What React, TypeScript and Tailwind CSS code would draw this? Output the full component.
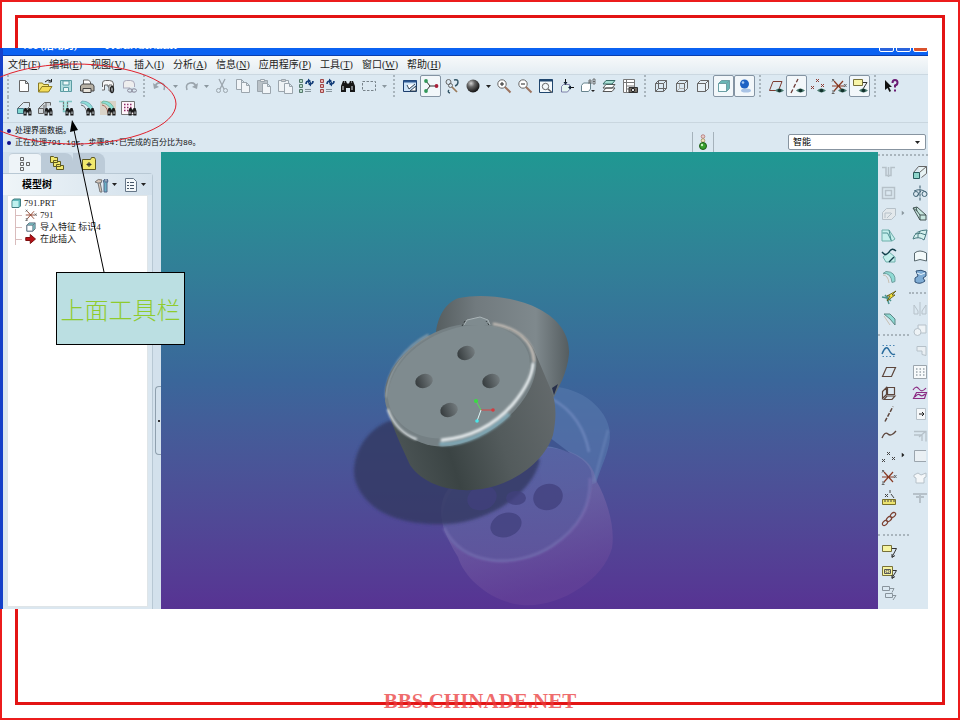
import type { ReactNode } from "react";

type Tool = { label: string; icon: ReactNode; on?: boolean; more?: boolean };

const Glyph = ({ children }: { children: ReactNode }) => (
  <svg viewBox="0 0 16 16" className="h-4 w-4 shrink-0" fill="none" stroke="#666" strokeWidth="1" aria-hidden="true">
    {children}
  </svg>
);

const Bino = () => (
  <g stroke="none" fill="#1c1c1c">
    <path d="M7.5 11l1-3h2l.5 1.5h1l.5-1.5h2l1 3v4.5h-3.2v-3h-1.6v3H7.5z" />
    <path d="M8.5 11.5h1v2.500h-1zM13.500 11.500h1v2.500h-1z" fill="#cfd8dc" />
  </g>
);

const Eye = () => (
  <g stroke="none">
    <path d="M7 12.500q4-4 9 0q-4.500 4-9 0z" fill="#4f7d73" />
    <circle cx="11.500" cy="12.500" r="1.800" fill="#12312c" />
  </g>
);

const Sheet = ({ x, y, c }: { x: number; y: number; c: string }) => (
  <path d={`M${x} ${y}h5l3 3v7h-8zM${x + 5} ${y}v3h3`} fill="#f1f5f8" stroke={c} />
);

const Crosses = ({ c }: { c: string }) => (
  <path d="M6 1l3 3M9 1l-3 3M1 8l3 3M4 8l-3 3M11 6l3 3M14 6l-3 3" stroke={c} />
);

const Axes = () => (
  <g>
    <path d="M3 3l9 10M12 3l-9 10M1 8h12" stroke="#8a3b24" strokeWidth="1.200" />
    <path d="M1 1l2 2M3 1l-2 2.500M13 6l2.500 3M15.500 6L13 9M1 13h2.500l-2.500 2.500h2.500" stroke="#666" />
  </g>
);

const Cube = ({ face, side, line }: { face: string; side: string; line: string }) => (
  <g stroke={line}>
    <path d="M2.500 5.500l3-3h8v8l-3 3h-8z" fill={side} />
    <path d="M2.500 5.500h8v8h-8zM10.500 5.500l3-3" fill={face} />
  </g>
);

const fileTools: Tool[] = [
  { label: "新建", icon: <Glyph><path d="M3.500 2.500h6l3 3v8h-9zM9.500 2.500v3h3" fill="#fff" /></Glyph> },
  { label: "打开", icon: <Glyph><path d="M1.500 14V5h4l1 1.500h5V9" fill="#f6e77d" stroke="#8a7a20" /><path d="M1.500 14L5 8.500h10L11.500 14z" fill="#f3dc58" stroke="#8a7a20" /><path d="M8 4q3-3.500 6-1M14.500 1v3h-3" stroke="#222" /></Glyph> },
  { label: "保存", icon: <Glyph><path d="M2.500 2.500h11v11h-11z" fill="#b3dedf" stroke="#5b9ca3" /><path d="M5 3h6v4H5zM5.500 9.500h5v4h-5z" fill="#eef8f8" stroke="#5b9ca3" /></Glyph> },
  { label: "打印", icon: <Glyph><path d="M4.500 7V2h5l2 2v3" fill="#fff" /><path d="M1.500 8l2-2h10l1.500 2v5h-13.500z" fill="#b8b2a6" stroke="#444" /><path d="M4 10.500h8v4H4z" fill="#e9e5dc" stroke="#444" /></Glyph> },
  { label: "发送", icon: <Glyph><path d="M2.500 9V5q0-2.500 3-2.500h4q4 0 4 3.500V9H8V7H4.500v5H2" fill="#f7f7f7" /><path d="M9 7h3v6H9z" fill="#fff" /><ellipse cx="12" cy="11.500" rx="1.500" ry="3" stroke="#222" strokeWidth="1.300" /></Glyph> },
  { label: "链接", icon: <Glyph><path d="M2.500 10V5q0-2.500 3-2.500h4q4 0 4 3.500v3" fill="#eee" stroke="#aab" /><path d="M2 10h7" stroke="#aab" /><ellipse cx="9" cy="12.500" rx="2.500" ry="1.700" stroke="#889" /><ellipse cx="13" cy="12.500" rx="2.500" ry="1.700" stroke="#889" /></Glyph> },
];

const gray = "#9ba5ad";

const undoTools: Tool[] = [
  { label: "撤消", more: true, icon: <Glyph><path d="M3 9q1-5 6-4t3 7" stroke={gray} strokeWidth="1.600" /><path d="M1 5l1 6 5-2z" fill={gray} stroke="none" /></Glyph> },
  { label: "重做", more: true, icon: <Glyph><path d="M13 9q-1-5-6-4t-3 7" stroke={gray} strokeWidth="1.600" /><path d="M15 5l-1 6-5-2z" fill={gray} stroke="none" /></Glyph> },
  { label: "剪切", icon: <Glyph><path d="M5 1l5 10M11 1L6 11" stroke={gray} strokeWidth="1.300" /><circle cx="4.500" cy="12.500" r="2" stroke={gray} /><circle cx="11.500" cy="12.500" r="2" stroke={gray} /></Glyph> },
  { label: "复制", icon: <Glyph><Sheet x={1.5} y={1.5} c={gray} /><Sheet x={6.5} y={4.5} c={gray} /></Glyph> },
  { label: "粘贴", icon: <Glyph><path d="M1.500 2.500h10v11h-10z" fill="#b9c1c7" stroke={gray} /><path d="M4.500 1.500h4v2h-4z" fill="#eee" stroke={gray} /><Sheet x={6.5} y={5.5} c={gray} /></Glyph> },
  { label: "选择性粘贴", icon: <Glyph><path d="M1.500 2.500h10v11h-10z" fill="#eef2f4" stroke={gray} /><path d="M4.500 1.500h4v2h-4z" fill="#ccc" stroke={gray} /><Sheet x={7.5} y={5.5} c={gray} /></Glyph> },
  { label: "再生", icon: <Glyph><path d="M1.500 1.500h3v3h-3zM1.500 6.500h3v3h-3zM1.500 11.500h3v3h-3z" fill="#b7d9c9" stroke="#557a6d" /><path d="M8 6q0-3 3-3M15 3q0 3-3 3" stroke="#123c78" strokeWidth="1.600" /><path d="M10 .5l3 2.500-3 2.500zM13 3.500v5l-3-2.500z" fill="#123c78" stroke="none" /><path d="M7 11.500h6M7 13.500h6" stroke="#89979f" /></Glyph> },
  { label: "再生管理器", icon: <Glyph><path d="M1.500 1.500h3v3h-3zM1.500 6.500h3v3h-3zM1.500 11.500h3v3h-3z" fill="#e8b3b3" stroke="#a04848" /><path d="M8 6q0-3 3-3M15 3q0 3-3 3" stroke="#123c78" strokeWidth="1.600" /><path d="M10 .5l3 2.500-3 2.500zM13 3.500v5l-3-2.500z" fill="#123c78" stroke="none" /><path d="M7 11.500h6M7 13.500h6" stroke="#89979f" /></Glyph> },
  { label: "查找", icon: <Glyph><path d="M1 8l2-5h3l1 2.500h2L10 3h3l2 5v6h-5v-4H6v4H1z" fill="#171717" stroke="none" /><path d="M3 8v4M12 8v4M4 4h1M11 4h1" stroke="#dce4e8" /></Glyph> },
  { label: "选取框", more: true, icon: <Glyph><path d="M1.500 3.500h13v9h-13z" stroke="#77828a" strokeDasharray="2.500 1.500" /></Glyph> },
];

const viewTools: Tool[] = [
  { label: "重画", icon: <Glyph><path d="M1.500 2.500h13v11h-13z" fill="#cde3f7" stroke="#1b3d6d" /><path d="M1.500 2.500h13v2h-13z" fill="#2b5690" stroke="none" /><path d="M5 7l2 4 6-5M8 13l6-5v5z" fill="#fff" stroke="#345" /></Glyph> },
  { label: "旋转中心", on: true, icon: <Glyph><path d="M3 3l4 5-4 5M7 8h6" stroke="#333" /><circle cx="3" cy="3" r="1.900" fill="#32975a" stroke="none" /><circle cx="3" cy="13" r="1.900" fill="#32975a" stroke="none" /><circle cx="13.500" cy="8" r="1.900" fill="#a81f38" stroke="none" /></Glyph> },
  { label: "定向模式", icon: <Glyph><circle cx="4.500" cy="4" r="2.500" /><circle cx="6.500" cy="7.500" r="2" /><path d="M8 9l5 5" stroke="#9a7a5a" strokeWidth="1.700" /><path d="M10 2q4-1 4 2t-3 4M5 12q-2 2 1 3" stroke="#356" strokeWidth="1.400" /></Glyph> },
  { label: "外观库", more: true, icon: <Glyph><circle cx="8" cy="8" r="6.500" fill="url(#ball)" stroke="none" /></Glyph> },
  { label: "放大", icon: <Glyph><circle cx="6" cy="6" r="4.200" fill="#fff" /><path d="M9 9l5.500 5.500" stroke="#9c7460" strokeWidth="2" /><path d="M4 6h4M6 4v4" stroke="#222" /></Glyph> },
  { label: "缩小", icon: <Glyph><circle cx="6" cy="6" r="4.200" fill="#fff" /><path d="M9 9l5.500 5.500" stroke="#9c7460" strokeWidth="2" /><path d="M4 6h4" stroke="#222" /></Glyph> },
  { label: "重新调整", icon: <Glyph><path d="M1.500 1.500h13v13h-13z" fill="#f4f9fc" stroke="#20466e" /><path d="M1.500 2.500h13" stroke="#20466e" strokeWidth="2" /><circle cx="7.500" cy="8.500" r="3.200" /><path d="M10 11l4 3.500" strokeWidth="1.600" /></Glyph> },
  { label: "重定向", icon: <Glyph><path d="M2.500 8.500l2-2h6v5l-2 2.500h-6z" fill="#e4f5f1" stroke="#669" strokeWidth=".8" /><path d="M6.500 1v5M15 9.500h-5" stroke="#111" /><path d="M4.500 4h4l-2 3zM12 7.500v4l-3-2z" fill="#123" stroke="none" /></Glyph> },
  { label: "已保存视图", icon: <Glyph><path d="M1.500 7.500l2-2.500h7v6l-2 2.500h-7z" fill="#fff" stroke="#67838d" /><path d="M9 6V2h2v4M9 4h2M13 1v5h2V1zM13 3.500h2" stroke="#555" strokeWidth=".8" /><path d="M11 12h4l-2 2z" fill="#222" stroke="none" /></Glyph> },
  { label: "图层", icon: <Glyph><path d="M2 13.500l3-3.500h9l-3 3.500zM2 10l3-3.500h9L11 10z" fill="#fff" stroke="#555" /><path d="M2 6l3-3.500h9L11 6z" fill="#a8e0d5" stroke="#396b66" /></Glyph> },
  { label: "视图管理器", icon: <Glyph><path d="M1.500 1.500h11v13h-11zM1.500 4.500h11M4.500 1.500v13M4.500 8h8M4.500 11h4" fill="#fff" stroke="#777" /><path d="M7 9.500h8.500v5H7z" fill="#776f66" stroke="#333" /><circle cx="11" cy="12" r="1.700" fill="#ddd" stroke="#222" /></Glyph> },
];

const displayTools: Tool[] = [
  { label: "线框", icon: <Glyph><path d="M2.500 5.500h8v8h-8zM5.500 2.500h8v8h-8zM2.500 5.500l3-3M10.500 5.500l3-3M2.500 13.500l3-3M10.500 13.500l3-3" /></Glyph> },
  { label: "隐藏线", icon: <Glyph><Cube face="none" side="none" line="#666" /><path d="M5.500 6v4.500h5M2.500 13.500l3-3" stroke="#aaa" /></Glyph> },
  { label: "消隐", icon: <Glyph><Cube face="#e7f0f6" side="#e7f0f6" line="#666" /></Glyph> },
  { label: "着色", on: true, icon: <Glyph><Cube face="#f6ffff" side="#67b7b5" line="#6b9fa4" /></Glyph> },
  { label: "增强的真实感", on: true, icon: <Glyph><ellipse cx="9" cy="12.500" rx="5" ry="2" fill="#a9c3e5" stroke="none" /><circle cx="7.500" cy="6" r="4.500" fill="#1e62c4" stroke="none" /><circle cx="6" cy="4.500" r="1.300" fill="#a9cdf6" stroke="none" /></Glyph> },
];

const datumTools: Tool[] = [
  { label: "平面显示", icon: <Glyph><path d="M1.500 12.500L5 3.500h9l-3.500 9z" stroke="#7c3c31" /><Eye /></Glyph> },
  { label: "轴显示", on: true, icon: <Glyph><path d="M2 15L9 1" stroke="#6b3a36" strokeWidth="1.300" strokeDasharray="4 2" /><Eye /></Glyph> },
  { label: "点显示", icon: <Glyph><Crosses c="#8c3a32" /><Eye /></Glyph> },
  { label: "坐标系显示", icon: <Glyph><Axes /><Eye /></Glyph> },
  { label: "注释显示", on: true, icon: <Glyph><path d="M1.500 1.500h9v6h-9z" fill="#f8f5a8" stroke="#777139" /><path d="M11 4.500h4L11 11" stroke="#333" /><Eye /></Glyph> },
];

const helpTools: Tool[] = [
  { label: "上下文帮助", icon: <Glyph><path d="M2 2v10l2.500-2 2 4 1.500-1-2-4h3z" fill="#111" stroke="none" /><path d="M9.500 5q0-3 2.500-3t2.500 2.500-2.500 3v2M12 11.500v2" stroke="#6a1b73" strokeWidth="2" /></Glyph> },
];

const findTools: Tool[] = [
  { label: "查找拉伸", icon: <Glyph><path d="M1.500 8.500h6v5h-6z" fill="#7ed6cf" stroke="#478" /><path d="M1.500 8.500l6-6h6v4L8 12" /><Bino /></Glyph> },
  { label: "查找旋转", icon: <Glyph><path d="M1.500 8.500h5v5h-5zM1.500 8.500l6-6h6v3M7 5v5M9 3v5" fill="#d0d6da" /><Bino /></Glyph> },
  { label: "查找孔", icon: <Glyph><path d="M1 1.500h4.500v10h4v-10H14" fill="#b7ebe6" stroke="#7cc4c2" strokeWidth="1.500" /><path d="M5.500 2v9M9.500 2v5" stroke="#777" strokeDasharray="2 1" /><Bino /></Glyph> },
  { label: "查找圆角", icon: <Glyph><path d="M1.500 3q7 0 10 8l3-1Q12 1 3 1z" fill="#8edfd8" stroke="#69a" strokeWidth=".7" /><path d="M2 5q5 1 6 8" /><Bino /></Glyph> },
  { label: "查找倒角", icon: <Glyph><path d="M0 1h16v14H0z" fill="#d9d3c8" stroke="none" /><path d="M1.500 3q7 0 10 8l3-1Q12 1 3 1z" fill="#8edfd8" stroke="#6a8" strokeWidth=".7" /><path d="M2 5q5 1 6 8" stroke="#a65" /><Bino /></Glyph> },
  { label: "查找阵列", icon: <Glyph><path d="M.5 1.500h13v13H.5z" fill="#fff5fb" stroke="#777" /><path d="M3 4.500h9M3 7.500h9M3 10.500h6" stroke="#8c2b66" strokeWidth="1.500" strokeDasharray="1.500 1.500" /><Bino /></Glyph> },
];

const pale = "#b6c1c9";
const teal = "#8fdad4";
const brown = "#5d463c";

const sideA: Tool[] = [
  { label: "孔", icon: <Glyph><path d="M1 3.500h4v8h5v-8h4M7.500 3v10" stroke={pale} strokeWidth="1.500" /></Glyph> },
  { label: "壳", icon: <Glyph><path d="M1.500 2.500h12v11h-12zM4.500 5.500h6v5h-6z" stroke={pale} strokeWidth="1.500" /></Glyph> },
  { label: "筋", more: true, icon: <Glyph><path d="M1.500 6.500l4-4h9v7l-4 4h-9zM4 12V7h6M6 12l5-5" fill="#e3e8eb" stroke={pale} /></Glyph> },
  { label: "拔模", icon: <Glyph><path d="M1 3h7l6 9-3 2H1z" fill="#c4efec" stroke="#6fafab" /><path d="M1.500 6h5l4 8M8 3l2 10" stroke="#4f9293" /></Glyph> },
  { label: "倒圆角", icon: <Glyph><path d="M8 4l6 5v5H5L2 9z" fill="#c4efec" stroke="#6fafab" /><path d="M1 4q4 5 7 0t7-1M8 14l5-5" stroke="#143f4b" strokeWidth="1.400" /></Glyph> },
  { label: "自动倒圆角", icon: <Glyph><path d="M2 4.500q8-1 9 9l3-1q1-10-9-10z" fill={teal} stroke="#6f9f9f" /><path d="M2 6q5 0 6 8" stroke="#c8c0b3" /></Glyph> },
  { label: "快速倒圆角", icon: <Glyph><path d="M1 7l5 1 2 6M4 5l6 6" stroke="#4a938f" strokeWidth="1.500" /><path d="M15 1L6 6h3L6 11l8-6h-3z" fill="#f4e13c" stroke="#57500f" strokeWidth=".8" /></Glyph> },
  { label: "倒角", icon: <Glyph><path d="M3 3h6l5 5v6l-5-6z" fill={teal} stroke="#5d8785" /><path d="M3 5l6 9" stroke="#c8c0b3" /></Glyph> },
];

const sideB: Tool[] = [
  { label: "草绘", icon: <Glyph><path d="M1 11q4-10 7-4t6 4" stroke="#296c9d" strokeWidth="1.500" /><path d="M1.500 2.500h13M1.500 13.500h13" stroke="#4a86b4" strokeDasharray="1.500 2" /></Glyph> },
  { label: "基准平面", icon: <Glyph><path d="M1.500 12.500l4-9h9l-4 9z" stroke={brown} strokeWidth="1.200" /></Glyph> },
  { label: "基准框", icon: <Glyph><path d="M6.500 2.500h7v7h-7zM1.500 6.500l4-4v7l-4 4zM3 14.500l3-3.500h8l-3 3.500z" stroke={brown} strokeWidth="1.200" /></Glyph> },
  { label: "基准轴", icon: <Glyph><path d="M4 15.500L12 .5" stroke={brown} strokeWidth="1.500" strokeDasharray="4 1.500" /></Glyph> },
  { label: "基准曲线", icon: <Glyph><path d="M1 11q3-7 6-4t8-3" stroke={brown} strokeWidth="1.300" /></Glyph> },
  { label: "基准点", more: true, icon: <Glyph><g transform="translate(0 3)"><Crosses c="#444" /></g></Glyph> },
  { label: "坐标系", icon: <Glyph><Axes /></Glyph> },
  { label: "分析", icon: <Glyph><path d="M1.500 9.500h13v5h-13z" fill="#ece36f" stroke="#776f28" /><path d="M4 10v2M7 10v2M10 10v2M13 10v2M4 4l3 3M7 4L4 7M9 0v3M10 4l3 4" stroke="#444" /></Glyph> },
  { label: "参照", icon: <Glyph><g stroke="#7c4233" strokeWidth="1.300"><ellipse cx="4" cy="12" rx="2" ry="3" transform="rotate(45 4 12)" /><ellipse cx="8" cy="8" rx="2" ry="3" transform="rotate(45 8 8)" /><ellipse cx="12" cy="4" rx="2" ry="3" transform="rotate(45 12 4)" /></g></Glyph> },
];

const sideC: Tool[] = [
  { label: "注释", icon: <Glyph><path d="M1.500 2.500h9v6h-9z" fill="#f6f4a0" stroke="#777139" /><path d="M11 5.500h4.500L11 14M11 11v3.500l3-2" stroke="#333" /></Glyph> },
  { label: "注释特征", icon: <Glyph><path d="M1.500 2.500h10v9h-10z" fill="#f6f4a0" stroke="#777139" /><path d="M3.500 5.500h6v4h-6z" stroke="#555" /><circle cx="6.500" cy="7.500" r="1.500" /><path d="M12 6.500h3.500L11 14M11 11v3.500l3-2" stroke="#333" /></Glyph> },
  { label: "传播", icon: <Glyph><path d="M1.500 1.500h7v4h-7zM4.500 8.500h7v4h-7zM9 3.500h4l-2 4M12 10.500h3l-3 4.500" stroke="#89949c" /></Glyph> },
];

const sideD: Tool[] = [
  { label: "拉伸", icon: <Glyph><path d="M6.500 2.500h8v7l-5 4" fill="#e8f3f4" /><path d="M1.500 8.500h6v6h-6z" fill="#8ed5cb" stroke="#265a5c" /><path d="M1.500 8.500l5-6M7.500 8.500l7-6" /></Glyph> },
  { label: "旋转", icon: <Glyph><path d="M8 .5v15" stroke="#356" strokeDasharray="3 1" /><circle cx="4" cy="9" r="2.500" stroke="#467" /><circle cx="12.500" cy="9" r="2.500" stroke="#467" /><path d="M2 6q6-3 12 1M5 11l4-5" stroke="#467" /></Glyph> },
  { label: "扫描混合", icon: <Glyph><path d="M1 2l4-1 9 8v5H8z" fill="#c5e6de" stroke="#455" /><path d="M1 2l4 3-1-4M8 9h6M8 9v5M5 5l3 4" stroke="#455" /></Glyph> },
  { label: "边界混合", icon: <Glyph><path d="M1 12Q3 3 15 3q-1 5-3 10-5-4-11-1zM8 4q-3 4-2 7M3 7q6-2 11 1" fill="#d4f0ed" stroke="#487b80" /></Glyph> },
  { label: "填充", icon: <Glyph><path d="M2.500 5q5-4 12 0v8q-7-3-12 0z" fill="#f2f9fa" stroke="#5a6a70" /></Glyph> },
  { label: "样式", icon: <Glyph><path d="M4 2q5-2 10 1v4l-3 2 2 3q-5 4-10 1V9l3-2z" fill="#80add5" stroke="#315277" /><path d="M5 4q4 3 8 0" stroke="#e5f2fb" /></Glyph> },
];

const sideE: Tool[] = [
  { label: "镜像", icon: <Glyph><path d="M8 1v14M2 4l4 6v3H2zM14 4l-4 6v3h4z" stroke={pale} /></Glyph> },
  { label: "合并", icon: <Glyph><path d="M6 3h8v8h-5M6 3v4" fill="#eef3f6" stroke={pale} /><circle cx="5.500" cy="10" r="3.500" fill="#eef3f6" stroke={pale} /></Glyph> },
  { label: "修剪", icon: <Glyph><path d="M5 3.500h9v9l-4-1V8H5z" fill="#e9eff3" stroke={pale} /></Glyph> },
  { label: "阵列", icon: <Glyph><path d="M1.500 1.500h13v13h-13z" fill="#f7fafb" stroke={gray} /><path d="M4 5h9M4 8h9M4 11h9" stroke={gray} strokeWidth="1.500" strokeDasharray="1.500 2" /></Glyph> },
  { label: "偏移", icon: <Glyph><path d="M1 5q3-5 6-1t7-1M1.500 13.500l3-6h10l-2 6zM3 12q3-4 5-2t5-1" stroke="#8c2c84" strokeWidth="1.200" /></Glyph> },
  { label: "加厚", icon: <Glyph><path d="M4.500 2.500h9v11h-9z" fill="#f5f8fa" stroke={pale} /><path d="M7 8h5M10 6l2 2-2 2" stroke="#222" /></Glyph> },
  { label: "延伸", icon: <Glyph><path d="M2 4.500h12v10M2 8h8v6M7 10l6-5" stroke={pale} strokeWidth="1.300" /></Glyph> },
  { label: "实体化", icon: <Glyph><path d="M14 2.500H2.500v11H14" fill="#eaf0f4" stroke={gray} /></Glyph> },
  { label: "投影", icon: <Glyph><path d="M2 6l4-2 3 2 5-2v4l-2 1v5H4V9L2 8z" fill="#f4f7f9" stroke={pale} /></Glyph> },
  { label: "包络", icon: <Glyph><path d="M1 4h14M4 7h8M8 4v9" stroke={pale} strokeWidth="2" /></Glyph> },
];

const Caret = ({ dark }: { dark?: boolean }) => (
  <svg viewBox="0 0 5 3" className="h-[3px] w-[5px]" aria-hidden="true">
    <path d="M0 0h5L2.500 3z" fill={dark ? "#222" : "#8b979f"} />
  </svg>
);

const Grip = () => (
  <div className="flex w-[10px] shrink-0 justify-center">
    <div className="h-[22px] border-l-2 border-dotted border-[#a9b5bd]" />
  </div>
);

function ToolGroup({ tools }: { tools: Tool[] }) {
  return (
    <div className="flex shrink-0">
      {tools.map((t) => (
        <div key={t.label} className="flex">
          <button
            type="button"
            aria-label={t.label}
            aria-pressed={t.on}
            className={
              t.on
                ? "flex h-[22px] w-[21px] items-center justify-center rounded-xs border border-[#8494a3] bg-[#f2f7fa]"
                : "flex h-[22px] w-[21px] items-center justify-center"
            }
          >
            {t.icon}
          </button>
          {t.more && (
            <button type="button" aria-label={t.label + "选项"} className="flex w-[10px] items-center justify-center">
              <Caret dark={t.label === "外观库"} />
            </button>
          )}
        </div>
      ))}
    </div>
  );
}

function SideGroup({ tools }: { tools: Tool[] }) {
  return (
    <>
      {tools.map((t) => (
        <div key={t.label} className="flex h-[21px] items-center">
          <button type="button" aria-label={t.label} className="flex h-[21px] w-[21px] shrink-0 items-center justify-center">
            {t.icon}
          </button>
          {t.more && (
            <button type="button" aria-label={t.label + "选项"} className="flex w-2 -rotate-90 justify-center">
              <Caret dark={t.label === "基准点"} />
            </button>
          )}
        </div>
      ))}
    </>
  );
}

const SideGrip = () => (
  <div className="flex h-[11px] items-center">
    <div className="w-full border-t-2 border-dotted border-[#a9b5bd]" />
  </div>
);

const menus = [
  ["文件", "F"], ["编辑", "E"], ["视图", "V"], ["插入", "I"], ["分析", "A"],
  ["信息", "N"], ["应用程序", "P"], ["工具", "T"], ["窗口", "W"], ["帮助", "H"],
];

function TitleBar() {
  return (
    <div className="flex h-2 items-start overflow-hidden border-b border-[#0a3fae] bg-[#0b62f2]">
      <div className="-mt-[7px] flex grow gap-7 pl-5 text-[10px] leading-[10px] font-bold whitespace-nowrap text-white">
        <span>791 (活动的)</span>
        <span>Pro/ENGINEER</span>
      </div>
      <div className="-mt-[12px] flex gap-[2px]">
        <button type="button" aria-label="最小化" className="h-4 w-[15px] rounded-xs border border-white bg-[#2a63dc]" />
        <button type="button" aria-label="最大化" className="h-4 w-[15px] rounded-xs border border-white bg-[#2a63dc]" />
        <button type="button" aria-label="关闭" className="h-4 w-[15px] rounded-xs border border-white bg-[#d9512c]" />
      </div>
    </div>
  );
}

function MessageBar() {
  return (
    <div className="flex h-[30px] border-t border-[#c9d6df] bg-[#dbe8f1]">
      <ul className="flex grow flex-col pt-[2px] pl-1 font-['Liberation_Mono','Noto_Sans_CJK_SC',monospace] text-[8px] leading-3 whitespace-nowrap text-[#111]">
        <li className="flex items-center gap-1">
          <span className="h-1 w-1 rounded-full bg-[#10108c]" />
          <span>处理界面数据。</span>
        </li>
        <li className="flex items-center gap-1">
          <span className="h-1 w-1 rounded-full bg-[#10108c]" />
          <span>正在处理791.igs。步骤84:已完成的百分比为80。</span>
        </li>
      </ul>
      <div className="mt-[9px] mr-[74px] flex w-[22px] items-center justify-center border-x border-[#a5b2bb]">
        <svg viewBox="0 0 10 16" className="h-4 w-[10px]" aria-label="状态">
          <circle cx="5" cy="2.500" r="1.800" fill="#e8cfcb" stroke="#a66" strokeWidth=".7" />
          <circle cx="5" cy="6.500" r="1.800" fill="#efe6c3" stroke="#998347" strokeWidth=".7" />
          <circle cx="5" cy="12" r="3.500" fill="#37a02c" stroke="#1e5c18" />
          <circle cx="4" cy="11" r="1.200" fill="#c9f3bc" />
        </svg>
      </div>
      <div className="relative mt-[11px] mr-[2px] h-4 w-[138px]">
        <select aria-label="过滤器" className="block h-4 w-full appearance-none rounded-xs border border-[#8794a0] bg-white pl-1 text-[9px] leading-3 text-black">
          <option>智能</option>
        </select>
        <div className="pointer-events-none absolute inset-y-0 right-[6px] flex items-center">
          <Caret dark />
        </div>
      </div>
    </div>
  );
}

function ModelTree() {
  return (
    <aside className="flex w-[158px] shrink-0 bg-[#d3e1ec]">
      <div className="flex grow flex-col">
        <div className="flex h-[21px] items-end pl-[6px]" role="tablist">
          <button type="button" role="tab" aria-selected="true" aria-label="模型树" className="flex h-5 w-[32px] items-center justify-center rounded-t-sm border-t border-[#c0ced8] bg-[#eef4f8]">
            <Glyph><path d="M3.500 1.500h3v3h-3zM3.500 6.500h3v3h-3zM3.500 11.500h3v3h-3zM9.500 6.500h3v3h-3z" /></Glyph>
          </button>
          <button type="button" role="tab" aria-selected="false" aria-label="文件夹浏览器" className="flex h-5 w-[32px] items-center justify-center rounded-tr-lg bg-[#bccbd8]">
            <Glyph><g fill="#f1e86d" stroke="#5f5a20"><path d="M1.500 1.500h3l1 1h3v5h-7zM4.500 5.500h3l1 1h3v5h-7zM7.500 9.500h3l1 1h3v4h-7z" /></g></Glyph>
          </button>
          <button type="button" role="tab" aria-selected="false" aria-label="收藏夹" className="flex h-5 w-[32px] items-center justify-center rounded-tr-lg bg-[#bccbd8]">
            <Glyph><path d="M1.500 4.500h8l1-2h3l1 2v10h-13z" fill="#f1e86d" stroke="#5f5a20" /><path d="M8 7v5M5.500 9.500h5M6.500 8l3 3M9.500 8l-3 3" stroke="#333" /></Glyph>
          </button>
        </div>
        <div className="mr-1 flex grow flex-col rounded-tr-sm border-t border-r border-[#b8c8d4] bg-[#dbe7f0]">
          <div className="flex h-[21px] items-center bg-linear-to-r from-[#eff5f8] to-[#d3e1ec] pr-1 pl-[19px]">
            <h2 className="grow text-[10px] leading-3 font-bold text-black">模型树</h2>
            <button type="button" aria-label="设置" className="flex w-[29px] items-center gap-[2px]">
              <Glyph><path d="M1 5q3-4 7-2l-1 3H4zM4 6l2 9h2L6 5" fill="#d8c7ba" stroke="#777" /><path d="M10 6v9h3V6q2-2 0-4v3h-2V2q-3 2-1 4z" fill="#6cb3c7" stroke="#568" /></Glyph>
              <Caret dark />
            </button>
            <button type="button" aria-label="显示" className="flex w-[25px] items-center gap-[2px]">
              <Glyph><path d="M2.500 1.500h8l3 3v10h-11z" fill="#f4f8fa" stroke="#678" /><path d="M4 5.500h2M4 8.500h2M4 11.500h2M7 5.500h4M7 8.500h4M7 11.500h4" stroke="#456" /></Glyph>
              <Caret dark />
            </button>
          </div>
          <ul className="mr-1 mb-[2px] ml-1 flex grow flex-col border border-[#dfe5e8] bg-white pt-[1px] pl-[3px] text-[9px] leading-3 whitespace-nowrap text-[#222]">
            <li className="flex h-3 items-center gap-[3px]">
              <svg viewBox="0 0 10 10" className="h-[10px] w-[10px]" aria-hidden="true"><path d="M1 2.500L3 1h6.500v7L8 9.500H1z" fill="#62bcbf" stroke="#427c80" /><path d="M1.500 3h6v6h-6z" fill="#bff0ee" /></svg>
              <span>791.PRT</span>
            </li>
            {[
              { name: "791", icon: <Axes /> },
              { name: "导入特征 标识4", icon: <Cube face="#fff" side="#7acaca" line="#678" /> },
              { name: "在此插入", icon: <path d="M1 6h6V2l7 6-7 6v-4H1z" fill="#b80f16" stroke="#7a0b0b" /> },
            ].map((row) => (
              <li key={row.name} className="ml-1 flex h-3 items-center gap-[3px] border-l border-[#d9bcbc]">
                <span className="h-px w-[6px] bg-[#d9bcbc]" />
                <svg viewBox="0 0 16 16" className="h-3 w-3" fill="none" strokeWidth="1.300" aria-hidden="true">{row.icon}</svg>
                <span>{row.name}</span>
              </li>
            ))}
          </ul>
        </div>
      </div>
      <button type="button" aria-label="折叠面板" className="mt-[234px] -ml-[2px] flex h-[69px] w-[6px] shrink-0 items-center justify-center rounded-l-sm border border-r-0 border-[#8fa0ae] bg-[#d3e1ec]">
        <span className="h-[2px] w-[2px] bg-[#333]" />
      </button>
    </aside>
  );
}

function Viewport() {
  return (
    <main className="flex min-w-0 grow bg-linear-to-b from-[#1f9892] via-[#3a669a] to-[#573393]">
      <svg viewBox="161 152 717 457" className="h-full w-full" role="img" aria-label="零件模型">
        <defs>
          <radialGradient id="ball" cx=".35" cy=".3" r=".7">
            <stop offset="0" stopColor="#d2d2d2" /><stop offset=".4" stopColor="#666" /><stop offset="1" stopColor="#151515" />
          </radialGradient>
          <linearGradient id="rear" x1="0" x2="1">
            <stop offset="0" stopColor="#565e60" /><stop offset=".3" stopColor="#717a7e" /><stop offset=".75" stopColor="#7f898d" /><stop offset="1" stopColor="#555d60" />
          </linearGradient>
          <linearGradient id="body" x1="0" y1=".6" x2="1" y2=".3">
            <stop offset="0" stopColor="#4c5556" /><stop offset=".3" stopColor="#3b4444" /><stop offset=".6" stopColor="#535b5c" /><stop offset="1" stopColor="#656b6d" />
          </linearGradient>
          <linearGradient id="hole"><stop offset="0" stopColor="#363c3e" /><stop offset="1" stopColor="#737b7e" /></linearGradient>
          <linearGradient id="echo" x1="0" y1="0" x2=".3" y2="1">
            <stop offset="0" stopColor="#6f8abb" stopOpacity=".4" /><stop offset=".5" stopColor="#7869a9" stopOpacity=".6" /><stop offset="1" stopColor="#6a4599" stopOpacity=".5" />
          </linearGradient>
          <linearGradient id="echoFace" x1="0" y1="0" x2="0" y2="1">
            <stop offset="0" stopColor="#5562a2" /><stop offset="1" stopColor="#5e559c" />
          </linearGradient>
          <filter id="soft"><feGaussianBlur stdDeviation="1.500" /></filter>
          <filter id="shine" x="-20%" y="-20%" width="140%" height="140%"><feGaussianBlur stdDeviation=".9" /></filter>
        </defs>

        <path d="M557 387C586 390 611 413 610 437C609 452 601 467 596 483L545 500L535 440Z" fill="#5779ae" opacity=".6" />
        <path d="M596 480C609 503 615 530 612 548C603 581 558 608 522 605C491 602 464 578 458 557C438 525 437 504 449 488C465 463 518 443 550 447C580 451 594 464 596 480Z" fill="url(#echo)" />
        <path d="M442 517C444 490 470 465 510 450C552 441 584 453 591 471C597 503 568 548 528 558C480 571 442 548 442 517Z" fill="url(#echoFace)" opacity=".9" />
        <path d="M444 528C463 567 516 569 552 546C579 528 591 507 590 478" fill="none" stroke="#7b73b5" strokeWidth="3" opacity=".6" filter="url(#shine)" />
        <path d="M552 399C573 410 585 430 589 452" fill="none" stroke="#8399cd" strokeWidth="2.500" opacity=".55" filter="url(#shine)" />
        <path d="M608 430L594 482" stroke="#7791c2" strokeWidth="2" opacity=".5" filter="url(#shine)" />
        <path d="M545 434L570 453Q556 447 546 446Z" fill="#384c87" opacity=".7" />

        <path d="M389 421C361 432 349 463 356 483C369 516 408 526 448 524C492 521 533 492 540 460L485 420Z" fill="#303761" opacity=".78" filter="url(#soft)" />
        <g fill="#41407d" opacity=".75">
          <ellipse cx="482" cy="498" rx="15" ry="12" transform="rotate(-20 482 498)" />
          <ellipse cx="548" cy="497" rx="15" ry="13" transform="rotate(-20 548 497)" />
          <ellipse cx="506" cy="525" rx="16" ry="12" transform="rotate(-20 506 525)" />
          <ellipse cx="516" cy="498" rx="10" ry="7" />
        </g>

        <path d="M436 332C438 316 446 302 459 298C482 293 516 297 539 309C560 320 570 336 569 354C567 374 559 386 554 397L520 390Z" fill="url(#rear)" />
        <path d="M552 388L558 384L554 395Z" fill="#272f4a" />
        <path d="M385 397C390 424 402 447 410 465C425 487 457 493 482 489C517 483 545 460 553 435C557 416 556 401 551 390L534 350C520 320 475 320 438 333C404 347 384 371 385 397Z" fill="url(#body)" />
        <path d="M385 401C385 361 423 329 465 324C500 320 530 334 536 357C541 391 502 437 450 446C415 450 389 426 385 401Z" fill="#758084" />
        <path d="M388 399C388 363 424 333 465 326C498 321 523 334 529 356C535 388 498 431 449 438C417 442 391 423 388 399Z" fill="#7f8b8f" />
        <g fill="none" strokeLinecap="round" filter="url(#shine)">
          <path d="M388 410C393 424 402 434 416 439" stroke="#e3e8ea" strokeWidth="2" />
          <path d="M441 444C466 445 491 431 508 415" stroke="#7fa6b3" strokeWidth="4" />
          <path d="M442 440C476 437 498 421 513 404C523 392 532 377 533 364" stroke="#e9eff1" strokeWidth="3" />
          <path d="M494 324C517 328 533 341 534 361" stroke="#c9c1b9" strokeWidth="2.500" />
          <path d="M386 397C386 371 405 347 428 335" stroke="#a3adb0" strokeWidth="1.500" />
        </g>
        <path d="M464 325L467 320L480 317L488 320L490 325" fill="#7f8b8f" stroke="#aab4b7" />
        <path d="M462 326l3-5M489 325l-3-4" stroke="#313739" strokeDasharray="2 2" />
        {[[466, 353], [424, 381], [491, 381], [449, 410]].map(([x, y]) => (
          <ellipse key={`${x}-${y}`} cx={x} cy={y} rx="9" ry="7" transform={`rotate(-20 ${x} ${y})`} fill="url(#hole)" />
        ))}
        <path d="M481 410L476 401" stroke="#56dd57" />
        <path d="M481 410H493" stroke="#d94545" />
        <path d="M481 410L477 421" stroke="#dffaf9" />
        <circle cx="476" cy="401" r="2" fill="#39dc41" />
        <circle cx="493" cy="410" r="1.800" fill="#d13c40" />
        <circle cx="477" cy="421" r="1.800" fill="#4ae5e9" />
      </svg>
    </main>
  );
}

export default function App() {
  return (
    <div className="relative flex min-h-screen flex-col overflow-hidden bg-white font-['Liberation_Serif','Noto_Sans_CJK_SC',serif]">
      <div className="pointer-events-none absolute inset-0 border-2 border-[#ec1c1c] p-[13px]" aria-hidden="true">
        <div className="h-full border-[3px] border-[#e31414]" />
      </div>

      <div className="relative mt-12 mr-8 flex grow flex-col border-l-[3px] border-[#1540c9] bg-[#dce9f2]">
        <TitleBar />
        <nav aria-label="主菜单" className="flex h-[18px] items-center gap-[9px] bg-linear-to-b from-[#f7f9fa] to-[#e4edf3] pl-[5px] text-[10px] leading-3 whitespace-nowrap text-[#222]">
          {menus.map(([name, key]) => (
            <button key={name} type="button">
              {name}(<u>{key}</u>)
            </button>
          ))}
        </nav>
        <div className="flex h-12 flex-col border-t border-[#cbd8e1]">
          <div className="flex">
            <Grip />
            <ToolGroup tools={fileTools} />
            <Grip />
            <ToolGroup tools={undoTools} />
            <Grip />
            <ToolGroup tools={viewTools} />
            <Grip />
            <ToolGroup tools={displayTools} />
            <Grip />
            <ToolGroup tools={datumTools} />
            <Grip />
            <ToolGroup tools={helpTools} />
          </div>
          <div className="flex">
            <Grip />
            <ToolGroup tools={findTools} />
          </div>
        </div>
        <MessageBar />
        <div className="flex grow">
          <ModelTree />
          <Viewport />
          <div className="flex w-[50px] shrink-0 flex-col overflow-hidden bg-[#dbe8f1]">
            <div className="h-[9px] pt-[2px]">
              <div className="border-t-2 border-dotted border-[#a9b5bd]" />
            </div>
            <div className="flex">
              <div className="w-[31px] shrink-0">
                <SideGroup tools={sideA} />
                <SideGrip />
                <SideGroup tools={sideB} />
                <SideGrip />
                <SideGroup tools={sideC} />
              </div>
              <div className="w-[21px] shrink-0">
                <SideGroup tools={sideD} />
                <SideGrip />
                <SideGroup tools={sideE} />
              </div>
            </div>
          </div>
        </div>
      </div>

      <footer className="relative flex h-[111px] items-end justify-center pb-[7px] text-[21px] leading-6 font-bold text-[#ea3c3c]/75">
        BBS.CHINADE.NET
      </footer>

      <div className="pointer-events-none absolute top-0 left-0 h-[345px] w-[185px]">
        <svg viewBox="0 0 185 345" className="h-full w-full" fill="none" aria-hidden="true">
          <ellipse cx="75" cy="104" rx="101" ry="40" stroke="#e0202c" />
          <path d="M104 272L74 130" stroke="#000" />
          <path d="M72 120l-2 12 8-2z" fill="#000" />
        </svg>
        <div className="absolute right-0 bottom-0 flex h-[73px] w-[129px] items-center justify-center border border-black bg-[#bbdfe2] font-['Noto_Sans_CJK_SC',sans-serif] text-[24px] leading-8 font-light whitespace-nowrap text-[#8fcb2d]">
          上面工具栏
        </div>
      </div>
    </div>
  );
}
